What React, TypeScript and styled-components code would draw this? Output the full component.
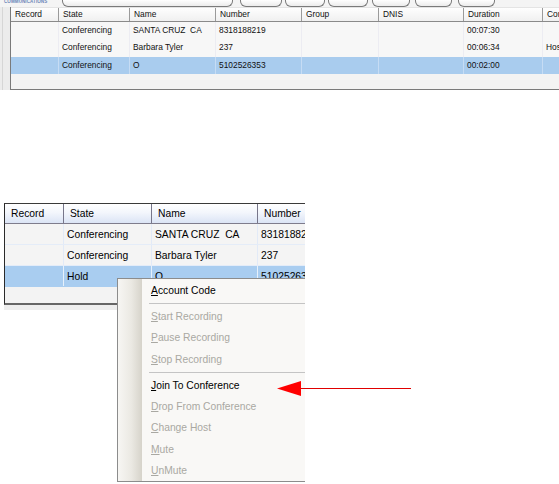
import React from "react";
import styled, { createGlobalStyle } from "styled-components";

const Global = createGlobalStyle`
  html, body { margin: 0; padding: 0; background: #ffffff; }
  #root { width: 559px; height: 484px; overflow: hidden; position: relative; }
  * { box-sizing: border-box; }
`;

const FONT = `"Liberation Sans", Arial, sans-serif`;

const Page = styled.div`
  width: 559px;
  height: 484px;
  display: flex;
  flex-direction: column;
  font-family: ${FONT};
  color: #000;
`;

/* ---------- top (small) screenshot ---------- */
const TopArea = styled.div`
  height: 90px;
  display: flex;
  flex-direction: column;
  background: #f7f7f7;
`;

const TopBar = styled.div`
  height: 7px;
  display: flex;
  align-items: flex-end;
  background: #f4f4f4;
  overflow: hidden;
`;

const Logo = styled.div`
  width: 62px;
  height: 7px;
  padding-left: 4px;
  font-size: 4.5px;
  line-height: 4px;
  letter-spacing: 0.1px;
  color: #6b86b8;
  font-weight: bold;
  align-self: flex-start;
`;

const ToolButton = styled.div<{ $w: number; $ml: number }>`
  width: ${(p) => p.$w}px;
  margin-left: ${(p) => p.$ml}px;
  height: 7px;
  border: 1px solid #7b7b7b;
  border-top: none;
  border-radius: 0 0 6px 6px;
  background: linear-gradient(#ffffff, #ececec);
`;

const TopBody = styled.div`
  flex: 1;
  display: flex;
`;

const SideStrip = styled.div`
  width: 10px;
  background: #ececec;
  display: flex;
  padding-left: 2px;
`;

const SideLine = styled.div`
  width: 1px;
  background: #d6d6d6;
`;

const SmallTable = styled.div`
  flex: 1;
  display: flex;
  flex-direction: column;
  border-left: 1px solid #7a7a7a;
  border-bottom: 1px solid #7a7a7a;
  background: #f3f3f3;
  overflow: hidden;
`;

const smallCols = "48px 71px 86px 86px 77px 85px 79px 60px";

const SmallHeader = styled.div`
  display: grid;
  grid-template-columns: ${smallCols};
  height: 15px;
  border-top: 1px solid #e4e4e4;
  border-bottom: 1px solid #8a8a8a;
  background: linear-gradient(#fefefe, #f0f0f0);
`;

const SmallHCell = styled.div`
  border-right: 1px solid #9a9a9a;
  font-size: 8.4px;
  line-height: 13px;
  padding-left: 4px;
  white-space: pre;
  overflow: hidden;
  color: #111;
`;

const SmallRow = styled.div<{ $sel?: boolean }>`
  display: grid;
  grid-template-columns: ${smallCols};
  height: 17.33px;
  background: ${(p) => (p.$sel ? "#a9ccee" : "#f7f7f7")};
`;

const SmallCell = styled.div<{ $sel?: boolean }>`
  border-right: 1px solid ${(p) => (p.$sel ? "#c6dcf4" : "#ececf2")};
  font-size: 8.4px;
  line-height: 17px;
  padding-left: 3px;
  white-space: pre;
  overflow: hidden;
  color: #111;
`;

/* ---------- second (large) screenshot ---------- */
const Spacer = styled.div<{ $h: number }>`
  height: ${(p) => p.$h}px;
  flex-shrink: 0;
`;

const SecondArea = styled.div`
  position: relative;
  flex: 1;
  padding-left: 4px;
`;

const Clip = styled.div`
  position: relative;
  width: 301px;
  height: 281px;
  overflow: hidden;
`;

const BigTable = styled.div`
  display: flex;
  flex-direction: column;
  height: 102px;
  border-top: 1px solid #3a3a3a;
  border-left: 1px solid #2a2a2a;
  border-bottom: 2px solid #666666;
  background: #f3f3f3;
`;

const bigCols = "59px 88px 106px 60px";

const BigHeader = styled.div`
  display: grid;
  grid-template-columns: ${bigCols};
  height: 20px;
  border-bottom: 1px solid #7e7c8c;
  background: linear-gradient(#ffffff 0%, #f3f6fc 45%, #dbe4f5 100%);
`;

const BigHCell = styled.div`
  border-right: 1px solid #77768a;
  font-size: 10.3px;
  line-height: 19px;
  padding-left: 6px;
  white-space: pre;
  overflow: hidden;
`;

const BigRow = styled.div<{ $sel?: boolean }>`
  display: grid;
  grid-template-columns: ${bigCols};
  height: 21px;
  border-bottom: 1px solid ${(p) => (p.$sel ? "#a9cdf0" : "#e4ecf8")};
  background: ${(p) => (p.$sel ? "#a9cdf0" : "#f4f4f4")};
`;

const BigCell = styled.div<{ $sel?: boolean }>`
  border-right: 1px solid ${(p) => (p.$sel ? "#e6f0fb" : "#e2eaf7")};
  font-size: 10.3px;
  line-height: 21px;
  padding-left: 3px;
  white-space: pre;
  overflow: hidden;
`;

const GreyBand = styled.div`
  height: 5px;
  background: #eeeeee;
`;

const Menu = styled.div`
  position: absolute;
  left: 113px;
  top: 75px;
  width: 200px;
  height: 204px;
  display: flex;
  border: 1px solid #8c8c8c;
  background: #f9f8f6;
`;

const MenuStrip = styled.div`
  width: 24px;
  flex-shrink: 0;
  background: linear-gradient(to right, #f7f6f3 0%, #ebe9e3 55%, #d6d3ca 100%);
`;

const MenuList = styled.div`
  flex: 1;
  display: flex;
  flex-direction: column;
  padding-top: 1px;
`;

const MenuItem = styled.div<{ $disabled?: boolean }>`
  height: 21.25px;
  line-height: 21px;
  padding-left: 9px;
  font-size: 10.3px;
  white-space: nowrap;
  color: ${(p) => (p.$disabled ? "#a9a8a2" : "#000")};
  u { text-underline-offset: 1px; }
`;

const MenuSep = styled.div`
  height: 5px;
  display: flex;
  align-items: center;
  padding-left: 7px;
  &::after {
    content: "";
    display: block;
    flex: 1;
    height: 1px;
    background: #c4c4c4;
  }
`;

const ArrowSvg = styled.svg`
  position: absolute;
  left: 274px;
  top: 175px;
`;

const smallHeaders = ["Record", "State", "Name", "Number", "Group", "DNIS", "Duration", "Conference"];
const smallRows = [
  ["", "Conferencing", "SANTA CRUZ  CA", "8318188219", "", "", "00:07:30", ""],
  ["", "Conferencing", "Barbara Tyler", "237", "", "", "00:06:34", "Host"],
  ["", "Conferencing", "O", "5102526353", "", "", "00:02:00", ""],
];

const bigHeaders = ["Record", "State", "Name", "Number"];
const bigRows = [
  ["", "Conferencing", "SANTA CRUZ  CA", "8318188219"],
  ["", "Conferencing", "Barbara Tyler", "237"],
  ["", "Hold", "O", "5102526353"],
];

const buttons = [
  { w: 171, ml: 0 },
  { w: 42, ml: 7 },
  { w: 40, ml: 3 },
  { w: 40, ml: 3 },
  { w: 38, ml: 4 },
  { w: 37, ml: 5 },
  { w: 37, ml: 6 },
];

type Item = { u: string; rest: string; disabled?: boolean } | "sep";
const menuItems: Item[] = [
  { u: "A", rest: "ccount Code" },
  "sep",
  { u: "S", rest: "tart Recording", disabled: true },
  { u: "P", rest: "ause Recording", disabled: true },
  { u: "S", rest: "top Recording", disabled: true },
  "sep",
  { u: "J", rest: "oin To Conference" },
  { u: "D", rest: "rop From Conference", disabled: true },
  { u: "C", rest: "hange Host", disabled: true },
  { u: "M", rest: "ute", disabled: true },
  { u: "U", rest: "nMute", disabled: true },
];

export default function App() {
  return (
    <Page>
      <Global />
      <TopArea>
        <TopBar>
          <Logo>COMMUNICATIONS</Logo>
          {buttons.map((b, i) => (
            <ToolButton key={i} $w={b.w} $ml={b.ml} />
          ))}
        </TopBar>
        <TopBody>
          <SideStrip>
            <SideLine />
          </SideStrip>
          <SmallTable>
            <SmallHeader>
              {smallHeaders.map((h) => (
                <SmallHCell key={h}>{h}</SmallHCell>
              ))}
            </SmallHeader>
            {smallRows.map((r, i) => (
              <SmallRow key={i} $sel={i === 2}>
                {r.map((c, j) => (
                  <SmallCell key={j} $sel={i === 2}>
                    {c}
                  </SmallCell>
                ))}
              </SmallRow>
            ))}
          </SmallTable>
        </TopBody>
      </TopArea>
      <Spacer $h={113} />
      <SecondArea>
        <Clip>
          <BigTable>
            <BigHeader>
              {bigHeaders.map((h) => (
                <BigHCell key={h}>{h}</BigHCell>
              ))}
            </BigHeader>
            {bigRows.map((r, i) => (
              <BigRow key={i} $sel={i === 2}>
                {r.map((c, j) => (
                  <BigCell key={j} $sel={i === 2}>
                    {c}
                  </BigCell>
                ))}
              </BigRow>
            ))}
          </BigTable>
          <GreyBand />
          <Menu>
            <MenuStrip />
            <MenuList>
              {menuItems.map((it, i) =>
                it === "sep" ? (
                  <MenuSep key={i} />
                ) : (
                  <MenuItem key={i} $disabled={it.disabled}>
                    <u>{it.u}</u>
                    {it.rest}
                  </MenuItem>
                )
              )}
            </MenuList>
          </Menu>
        </Clip>
        <ArrowSvg width="140" height="20" viewBox="0 0 140 20">
          <line x1="24" y1="10.5" x2="137" y2="10.5" stroke="#e00000" strokeWidth="1.2" />
          <polygon points="3,10.5 27,3 27,18" fill="#ff0000" />
        </ArrowSvg>
      </SecondArea>
    </Page>
  );
}
